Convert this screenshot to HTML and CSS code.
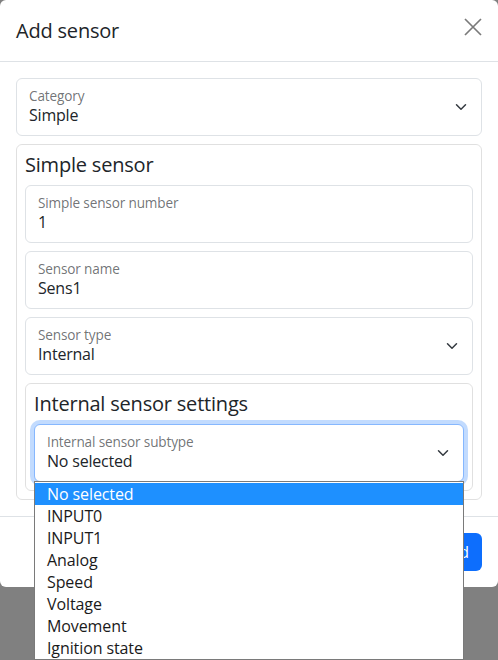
FILE: index.html
```html
<!DOCTYPE html>
<html lang="en">
<head>
<meta charset="utf-8">
<title>Add sensor</title>
<link rel="stylesheet" href="styles.css">
</head>
<body>
<div class="backdrop">
  <div class="modal">
    <div class="modal-header">
      <h1 class="modal-title">Add sensor</h1>
      <button class="btn-close" aria-label="Close">
        <svg width="18" height="18" viewBox="0 0 18 18"><path d="M1 1 L17 17 M17 1 L1 17" stroke="#7a7a7a" stroke-width="1.7" fill="none"/></svg>
      </button>
    </div>
    <div class="modal-body">
      <div class="field select">
        <span class="label">Category</span>
        <span class="value">Simple</span>
        <svg class="chev" width="16" height="12" viewBox="0 0 16 16"><path d="m2 5 6 6 6-6" stroke="#343a40" stroke-width="2" fill="none" stroke-linecap="round" stroke-linejoin="round"/></svg>
      </div>
      <div class="card">
        <h2 class="card-title">Simple sensor</h2>
        <div class="field">
          <span class="label">Simple sensor number</span>
          <span class="value">1</span>
        </div>
        <div class="field">
          <span class="label">Sensor name</span>
          <span class="value">Sens1</span>
        </div>
        <div class="field select">
          <span class="label">Sensor type</span>
          <span class="value">Internal</span>
          <svg class="chev" width="16" height="12" viewBox="0 0 16 16"><path d="m2 5 6 6 6-6" stroke="#343a40" stroke-width="2" fill="none" stroke-linecap="round" stroke-linejoin="round"/></svg>
        </div>
        <div class="card card-inner">
          <h2 class="card-title">Internal sensor settings</h2>
          <div class="field select focused last">
            <span class="label">Internal sensor subtype</span>
            <span class="value">No selected</span>
            <svg class="chev" width="16" height="12" viewBox="0 0 16 16"><path d="m2 5 6 6 6-6" stroke="#343a40" stroke-width="2" fill="none" stroke-linecap="round" stroke-linejoin="round"/></svg>
            <ul class="dropdown">
              <li class="opt active">No selected</li>
              <li class="opt">INPUT0</li>
              <li class="opt">INPUT1</li>
              <li class="opt">Analog</li>
              <li class="opt">Speed</li>
              <li class="opt">Voltage</li>
              <li class="opt">Movement</li>
              <li class="opt">Ignition state</li>
            </ul>
          </div>
        </div>
      </div>
    </div>
    <div class="modal-footer">
      <button class="btn btn-secondary">Close</button>
      <button class="btn btn-primary">Add</button>
    </div>
  </div>
</div>
</body>
</html>
```

FILE: styles.css
```css
html, body {
  margin: 0;
  padding: 0;
}
body {
  width: 498px;
  height: 660px;
  overflow: hidden;
  background: #808080;
  font-family: "Open Sans", "Noto Sans", sans-serif;
  color: #212529;
}
.backdrop {
  width: 498px;
  height: 660px;
}
.modal {
  background: #fff;
  border-radius: 6px;
  width: 498px;
  box-sizing: border-box;
}
.modal-header {
  display: flex;
  align-items: center;
  justify-content: space-between;
  padding: 16px 16px 15px;
  border-bottom: 1px solid #dee2e6;
}
.modal-title {
  margin: 0;
  font-size: 20px;
  font-weight: 500;
  line-height: 30px;
  letter-spacing: -0.2px;
}
.btn-close {
  border: 0;
  background: transparent;
  padding: 0;
  margin: -8px 0 0 0;
  width: 18px;
  height: 18px;
  display: flex;
}
.modal-body {
  padding: 16px;
}
.field {
  position: relative;
  box-sizing: border-box;
  height: 58px;
  border: 1px solid #dee2e6;
  border-radius: 6px;
  padding: 8px 12px 0;
  display: flex;
  flex-direction: column;
  margin-bottom: 8px;
  background: #fff;
}
.field.last {
  margin-bottom: 0;
}
.label {
  font-size: 13.6px;
  line-height: 18px;
  color: rgba(33, 37, 41, 0.65);
  letter-spacing: -0.15px;
}
.value {
  font-size: 16px;
  line-height: 21px;
  letter-spacing: -0.2px;
}
.chev {
  position: absolute;
  right: 12px;
  top: 22px;
}
.focused {
  border-color: #86b7fe;
  box-shadow: 0 0 0 4px rgba(13, 110, 253, 0.25);
}
.card {
  border: 1px solid rgba(0, 0, 0, 0.12);
  border-radius: 6px;
  padding: 8px;
}
.card-inner {
  margin-top: 8px;
}
.card-title {
  margin: 0 0 8px;
  font-size: 20px;
  font-weight: 500;
  line-height: 24px;
  letter-spacing: -0.2px;
}
.dropdown {
  position: absolute;
  left: -1px;
  right: -1px;
  top: 56px;
  margin: 0;
  padding: 1px 0 0;
  list-style: none;
  background: #fff;
  border: 1px solid #7a7a7a;
  z-index: 5;
}
.opt {
  height: 22px;
  line-height: 22px;
  padding: 0 12px;
  font-size: 16px;
  letter-spacing: -0.1px;
  color: #1a1a1a;
}
.opt.active {
  background: #1e90ff;
  color: #fff;
}
.modal-footer {
  display: flex;
  justify-content: flex-end;
  align-items: center;
  padding: 12px;
  border-top: 1px solid #dee2e6;
}
.btn {
  margin: 4px;
  padding: 6px 12px;
  font-family: inherit;
  font-size: 16px;
  line-height: 24px;
  border: 1px solid transparent;
  border-radius: 6px;
  color: #fff;
}
.btn-secondary {
  background: #6c757d;
}
.btn-primary {
  background: #0d6efd;
}
```
